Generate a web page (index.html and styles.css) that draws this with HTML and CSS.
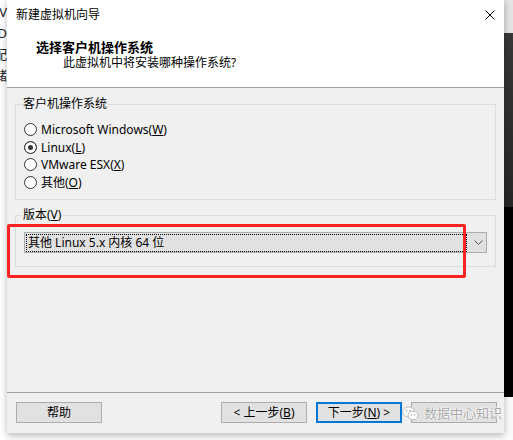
FILE: index.html
```html
<!DOCTYPE html>
<html lang="zh-CN">
<head>
    <meta charset="UTF-8">
    <meta name="viewport" content="width=device-width, initial-scale=1.0">
    <title>新建虚拟机向导</title>
    <link rel="stylesheet" href="styles.css">
</head>
<body>
    <div class="screen">
        <div class="backdrop-left">
            <div class="bg-line">NV</div>
            <div class="bg-line">TD</div>
            <div class="bg-line">配</div>
            <div class="bg-line">储</div>
        </div>

        <div class="dialog">
            <div class="dlg-header">
                <div class="title-bar">
                    <span class="title">新建虚拟机向导</span>
                    <svg class="close" width="10" height="10" viewBox="0 0 10 10">
                        <path d="M0.5 0.5 L9.5 9.5 M9.5 0.5 L0.5 9.5" stroke="#000" stroke-width="1" fill="none"/>
                    </svg>
                </div>
                <div class="heading">选择客户机操作系统</div>
                <div class="subheading">此虚拟机中将安装哪种操作系统?</div>
            </div>

            <div class="dlg-body">
                <fieldset class="group group-os">
                    <legend>客户机操作系统</legend>
                    <div class="radio"><span class="radio-mark"></span>Microsoft Windows(<u>W</u>)</div>
                    <div class="radio"><span class="radio-mark checked"></span>Linux(<u>L</u>)</div>
                    <div class="radio"><span class="radio-mark"></span>VMware ESX(<u>X</u>)</div>
                    <div class="radio"><span class="radio-mark"></span>其他(<u>O</u>)</div>
                </fieldset>

                <fieldset class="group group-ver">
                    <legend>版本(<u>V</u>)</legend>
                    <div class="combo">
                        <div class="combo-value">其他 Linux 5.x 内核 64 位</div>
                        <div class="combo-arrow">
                            <svg width="9" height="5" viewBox="0 0 9 5">
                                <path d="M0.5 0.5 L4.5 4.5 L8.5 0.5" stroke="#555" stroke-width="1" fill="none"/>
                            </svg>
                        </div>
                    </div>
                </fieldset>
            </div>

            <div class="dlg-footer">
                <button class="btn">帮助</button>
                <div class="spacer"></div>
                <button class="btn">&lt; 上一步(<u>B</u>)</button>
                <button class="btn btn-default">下一步(<u>N</u>) &gt;</button>
                <button class="btn"></button>
            </div>

            <!-- 标注框 -->
            <div class="annot"></div>

            <div class="watermark">
                <svg width="17" height="15" viewBox="0 0 17 15">
                    <ellipse cx="6.5" cy="6" rx="6" ry="5" fill="#fff" stroke="#bbb" stroke-width="1"/>
                    <ellipse cx="11" cy="9.5" rx="5" ry="4.2" fill="#fff" stroke="#bbb" stroke-width="1"/>
                    <circle cx="4.5" cy="4.5" r="0.8" fill="#999"/>
                    <circle cx="8" cy="4.5" r="0.8" fill="#999"/>
                    <circle cx="9.5" cy="9" r="0.7" fill="#999"/>
                    <circle cx="12.5" cy="9" r="0.7" fill="#999"/>
                </svg>
                <span>数据中心知识</span>
            </div>
        </div>

        <div class="backdrop-right">
            <div class="br-top"></div>
            <div class="br-dark"></div>
            <div class="br-black"></div>
            <div class="br-bottom"></div>
        </div>
    </div>
</body>
</html>
```

FILE: styles.css
```css
body {
    margin: 0;
    background-color: #fff;
    font-family: 'Noto Sans', 'Noto Sans CJK SC', sans-serif;
    font-size: 12px;
    color: #000;
}

.screen {
    width: 513px;
    height: 440px;
    display: flex;
    overflow: hidden;
    background-color: #fafafa;
}

.backdrop-left {
    width: 7px;
    flex: none;
    padding-top: 2px;
    overflow: hidden;
    background-color: #fff;
}

.bg-line {
    display: flex;
    justify-content: flex-end;
    height: 21px;
    line-height: 21px;
    font-size: 13px;
    color: #222;
    white-space: nowrap;
}

.dialog {
    position: relative;
    width: 497px;
    height: 433px;
    flex: none;
    display: flex;
    flex-direction: column;
    background-color: #f0f0f0;
    box-shadow: 0 2px 7px rgba(0, 0, 0, 0.28);
    z-index: 1;
}

.dlg-header {
    height: 87px;
    background-color: #fff;
    border-bottom: 1px solid #a0a0a0;
}

.title-bar {
    height: 30px;
    display: flex;
    align-items: center;
    justify-content: space-between;
    padding: 0 9px 0 9px;
}

.title {
    line-height: 30px;
}

.heading {
    margin-top: 9px;
    padding-left: 29px;
    line-height: 16px;
    font-size: 13px;
    font-weight: bold;
}

.subheading {
    padding-left: 56px;
    line-height: 16px;
}

.dlg-body {
    flex: 1;
    padding-top: 8px;
}

.group {
    margin: 0 8px;
    padding: 0 8px;
    border: 1px solid #dcdcdc;
    min-width: 0;
}

.group legend {
    margin-left: -2px;
    padding: 0 1px;
    line-height: 16px;
}

.group-os {
    padding-top: 9px;
    padding-bottom: 8px;
}

.radio {
    display: flex;
    align-items: center;
    height: 17.6px;
    line-height: 17.6px;
    white-space: nowrap;
}

.radio-mark {
    box-sizing: border-box;
    width: 13px;
    height: 13px;
    margin-right: 4px;
    border: 1px solid #333;
    border-radius: 50%;
    background-color: #fff;
}

.radio-mark.checked {
    background-color: #333;
    box-shadow: inset 0 0 0 3px #fff;
}

.group-ver {
    margin-top: 7px;
    padding-top: 9px;
    padding-bottom: 13px;
}

.combo {
    box-sizing: border-box;
    height: 21px;
    display: flex;
    background-color: #e1e1e1;
    border: 1px solid #adadad;
}

.combo-value {
    flex: 1;
    box-sizing: border-box;
    height: 18px;
    margin: 1px 0 0 1px;
    padding-left: 1px;
    border: 1px dotted #000;
    line-height: 16px;
    white-space: nowrap;
}

.combo-arrow {
    width: 19px;
    display: flex;
    align-items: center;
    justify-content: center;
    padding-left: 4px;
    box-sizing: border-box;
}

.dlg-footer {
    display: flex;
    gap: 9px;
    padding: 9px 7px 10px 9px;
    border-top: 1px solid #a0a0a0;
}

.spacer {
    flex: 1;
}

.btn {
    box-sizing: border-box;
    width: 86px;
    height: 21px;
    padding: 0;
    font-family: inherit;
    font-size: 12px;
    line-height: 19px;
    color: #000;
    background-color: #e1e1e1;
    border: 1px solid #adadad;
}

.btn-default {
    border: 2px solid #0078d7;
    line-height: 17px;
}

.annot {
    position: absolute;
    left: 0;
    top: 224px;
    width: 459px;
    height: 54px;
    box-sizing: border-box;
    border: 3px solid #ff2222;
    border-radius: 2px;
}

.watermark {
    position: absolute;
    left: 395px;
    top: 405px;
    display: flex;
    align-items: center;
    gap: 5px;
    font-size: 13px;
    line-height: 16px;
    color: #a8a8a8;
    text-shadow: 0 0 1px #fff, 0 0 2px #fff, 0 0 2px #fff;
    white-space: nowrap;
}

.backdrop-right {
    flex: 1;
    display: flex;
    flex-direction: column;
}

.br-top {
    height: 33px;
    background-color: #e4e4e4;
}

.br-dark {
    height: 174px;
    background: linear-gradient(#383838, #262626);
}

.br-black {
    height: 190px;
    background-color: #000;
}

.br-bottom {
    flex: 1;
    background-color: #fafafa;
}
```
